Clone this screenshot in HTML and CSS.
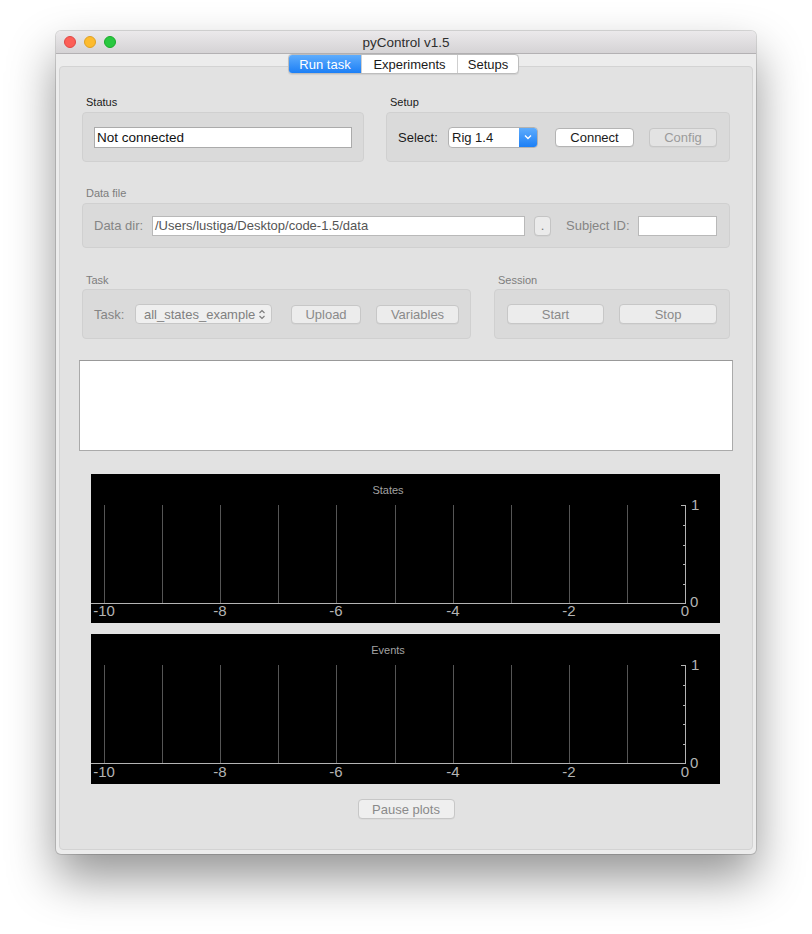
FILE: index.html
```html
<!DOCTYPE html>
<html>
<head>
<meta charset="utf-8">
<title>pyControl v1.5</title>
<link rel="stylesheet" href="styles.css">
</head>
<body>
<div class="window">
  <div class="titlebar">
    <div class="lights">
      <span class="light red"></span>
      <span class="light yellow"></span>
      <span class="light green"></span>
    </div>
    <div class="title">pyControl v1.5</div>
    <div class="spacer"></div>
  </div>
  <div class="wbody">
    <div class="tabs">
      <span class="tab tab-run active">Run task</span>
      <span class="tab tab-exp">Experiments</span>
      <span class="tab tab-set">Setups</span>
    </div>
    <div class="pane">
      <div class="row row-top">
        <section class="group">
          <div class="glabel">Status</div>
          <div class="gbox box-50">
            <div class="field status-field">Not connected</div>
          </div>
        </section>
        <section class="group">
          <div class="glabel">Setup</div>
          <div class="gbox box-50 setup-box">
            <span class="lbl lbl-select">Select:</span>
            <div class="combo combo-rig">
              <span class="combo-text">Rig 1.4</span>
              <span class="combo-arrow">
                <svg width="8" height="6" viewBox="0 0 8 6"><polyline points="1,1.5 4,4.5 7,1.5" fill="none" stroke="#fff" stroke-width="1.4"/></svg>
              </span>
            </div>
            <span class="btn btn-connect">Connect</span>
            <span class="btn btn-disabled btn-config">Config</span>
          </div>
        </section>
      </div>

      <section class="group group-data">
        <div class="glabel dim">Data file</div>
        <div class="gbox box-45 data-box">
          <span class="lbl dim lbl-datadir">Data dir:</span>
          <div class="field field-dir">/Users/lustiga/Desktop/code-1.5/data</div>
          <span class="btn btn-dots">.</span>
          <span class="lbl dim lbl-subject">Subject ID:</span>
          <div class="field field-subject"></div>
        </div>
      </section>

      <div class="row row-task">
        <section class="group">
          <div class="glabel dim">Task</div>
          <div class="gbox box-50 task-box">
            <span class="lbl dim lbl-task">Task:</span>
            <div class="combo-dis">
              <span>all_states_example</span>
              <svg width="8" height="11" viewBox="0 0 8 11"><polyline points="1.5,4 4,1.5 6.5,4" fill="none" stroke="#7a7a7a" stroke-width="1.1"/><polyline points="1.5,7 4,9.5 6.5,7" fill="none" stroke="#7a7a7a" stroke-width="1.1"/></svg>
            </div>
            <span class="btn btn-disabled btn-upload">Upload</span>
            <span class="btn btn-disabled btn-vars">Variables</span>
          </div>
        </section>
        <section class="group">
          <div class="glabel dim">Session</div>
          <div class="gbox box-50 session-box">
            <span class="btn btn-disabled btn-start">Start</span>
            <span class="btn btn-disabled btn-stop">Stop</span>
          </div>
        </section>
      </div>

      <div class="console"></div>

      <div class="plots">
        <svg class="plot" width="629" height="149" viewBox="0 0 629 149">
          <rect width="629" height="149" fill="#000"/>
          <text class="ptitle" x="297" y="20" text-anchor="middle">States</text>
          <g stroke="#555555" stroke-width="1">
            <line x1="13.5" y1="31" x2="13.5" y2="129"/>
            <line x1="71.5" y1="31" x2="71.5" y2="129"/>
            <line x1="129.5" y1="31" x2="129.5" y2="129"/>
            <line x1="187.5" y1="31" x2="187.5" y2="129"/>
            <line x1="245.5" y1="31" x2="245.5" y2="129"/>
            <line x1="304.5" y1="31" x2="304.5" y2="129"/>
            <line x1="362.5" y1="31" x2="362.5" y2="129"/>
            <line x1="420.5" y1="31" x2="420.5" y2="129"/>
            <line x1="478.5" y1="31" x2="478.5" y2="129"/>
            <line x1="536.5" y1="31" x2="536.5" y2="129"/>
          </g>
          <g stroke="#b4b4b4" stroke-width="1">
            <line x1="0" y1="129.5" x2="595" y2="129.5"/>
            <line x1="594.5" y1="31" x2="594.5" y2="130"/>
            <line x1="590" y1="31.5" x2="594" y2="31.5"/>
            <line x1="592" y1="51.5" x2="594" y2="51.5"/>
            <line x1="592" y1="71.5" x2="594" y2="71.5"/>
            <line x1="592" y1="90.5" x2="594" y2="90.5"/>
            <line x1="592" y1="110.5" x2="594" y2="110.5"/>
          </g>
          <g class="plabel">
            <text x="13" y="142" text-anchor="middle">-10</text>
            <text x="129" y="142" text-anchor="middle">-8</text>
            <text x="245" y="142" text-anchor="middle">-6</text>
            <text x="362" y="142" text-anchor="middle">-4</text>
            <text x="478" y="142" text-anchor="middle">-2</text>
            <text x="594" y="142" text-anchor="middle">0</text>
            <text x="600" y="36">1</text>
            <text x="599" y="133">0</text>
          </g>
        </svg>
        <svg class="plot" width="629" height="150" viewBox="0 0 629 150">
          <rect width="629" height="150" fill="#000"/>
          <text class="ptitle" x="297" y="20" text-anchor="middle">Events</text>
          <g stroke="#555555" stroke-width="1">
            <line x1="13.5" y1="31" x2="13.5" y2="129"/>
            <line x1="71.5" y1="31" x2="71.5" y2="129"/>
            <line x1="129.5" y1="31" x2="129.5" y2="129"/>
            <line x1="187.5" y1="31" x2="187.5" y2="129"/>
            <line x1="245.5" y1="31" x2="245.5" y2="129"/>
            <line x1="304.5" y1="31" x2="304.5" y2="129"/>
            <line x1="362.5" y1="31" x2="362.5" y2="129"/>
            <line x1="420.5" y1="31" x2="420.5" y2="129"/>
            <line x1="478.5" y1="31" x2="478.5" y2="129"/>
            <line x1="536.5" y1="31" x2="536.5" y2="129"/>
          </g>
          <g stroke="#b4b4b4" stroke-width="1">
            <line x1="0" y1="129.5" x2="595" y2="129.5"/>
            <line x1="594.5" y1="31" x2="594.5" y2="130"/>
            <line x1="590" y1="31.5" x2="594" y2="31.5"/>
            <line x1="592" y1="51.5" x2="594" y2="51.5"/>
            <line x1="592" y1="71.5" x2="594" y2="71.5"/>
            <line x1="592" y1="90.5" x2="594" y2="90.5"/>
            <line x1="592" y1="110.5" x2="594" y2="110.5"/>
          </g>
          <g class="plabel">
            <text x="13" y="143" text-anchor="middle">-10</text>
            <text x="129" y="143" text-anchor="middle">-8</text>
            <text x="245" y="143" text-anchor="middle">-6</text>
            <text x="362" y="143" text-anchor="middle">-4</text>
            <text x="478" y="143" text-anchor="middle">-2</text>
            <text x="594" y="143" text-anchor="middle">0</text>
            <text x="600" y="36">1</text>
            <text x="599" y="134">0</text>
          </g>
        </svg>
      </div>

      <div class="pause-row">
        <span class="btn btn-disabled btn-pause">Pause plots</span>
      </div>
    </div>
  </div>
</div>
</body>
</html>
```

FILE: styles.css
```css
* { box-sizing: border-box; }
html, body { margin: 0; padding: 0; background: #ffffff; }
body {
  font-family: "Liberation Sans", Arial, sans-serif;
  font-size: 13px;
  color: #1a1a1a;
  width: 812px;
  height: 934px;
  overflow: hidden;
}
.window {
  margin: 31px 0 0 56px;
  width: 700px;
  height: 823px;
  border-radius: 5px;
  background: #ececec;
  box-shadow: 0 24px 48px rgba(0,0,0,0.42), 0 0 0 1px rgba(0,0,0,0.14);
  display: flex;
  flex-direction: column;
  overflow: hidden;
}
.titlebar {
  height: 23px;
  flex: none;
  display: grid;
  grid-template-columns: 1fr auto 1fr;
  align-items: center;
  background: linear-gradient(#ebe9eb, #d5d3d5);
  border-bottom: 1px solid #b3b1b3;
}
.lights { display: flex; gap: 8px; padding-left: 8px; }
.light { width: 12px; height: 12px; border-radius: 50%; display: block; }
.red { background: #fc5f57; border: 0.5px solid #df4744; }
.yellow { background: #fdbb2e; border: 0.5px solid #dea123; }
.green { background: #29c840; border: 0.5px solid #1aab29; }
.title { font-size: 13.5px; color: #2e2e2e; }

.wbody { flex: 1; display: flex; flex-direction: column; }
.tabs {
  position: relative;
  z-index: 1;
  align-self: center;
  margin-right: 5px;
  display: flex;
  height: 20px;
  background: #fff;
  border: 1px solid #bdbdbd;
  border-radius: 4px;
  overflow: hidden;
  box-shadow: 0 0.5px 1px rgba(0,0,0,0.08);
}
.tab {
  display: flex;
  align-items: center;
  justify-content: center;
  font-size: 13px;
  color: #1a1a1a;
  border-left: 1px solid #cfcfcf;
}
.tab:first-child { border-left: none; }
.tab-run { width: 72px; }
.tab-exp { width: 96px; }
.tab-set { width: 61px; }
.tab.active {
  color: #fff;
  background: linear-gradient(#5eacfc, #1c7ff6);
}

.pane {
  flex: 1;
  margin: -8px 3px 4px;
  background: #e2e2e2;
  border: 1px solid #d3d3d3;
  border-radius: 4px;
  padding: 28px 22px 0;
  display: flex;
  flex-direction: column;
}
.row { display: grid; column-gap: 22px; }
.row-top { grid-template-columns: 282px 344px; }
.row-task { grid-template-columns: 389px 236px; column-gap: 23px; margin-top: 25px; }
.group-data { margin-top: 24px; }

.glabel {
  height: 14px;
  line-height: 14px;
  font-size: 11px;
  color: #1a1a1a;
  padding-left: 4px;
  margin-bottom: 3px;
}
.row-task .glabel { margin-bottom: 2px; }
.glabel.dim { color: #7d7d7d; }

.gbox {
  background: #dadada;
  border: 1px solid #d0d0d0;
  border-radius: 4px;
  display: flex;
  align-items: center;
  padding: 0 11px;
}
.box-50 { height: 50px; }
.box-45 { height: 45px; }

.lbl { font-size: 13px; white-space: nowrap; }
.dim { color: #858585; }

.field {
  height: 21px;
  background: #fff;
  border: 1px solid #ababab;
  display: flex;
  align-items: center;
  padding-left: 2px;
  white-space: nowrap;
}
.status-field { width: 258px; color: #111; font-size: 13.5px; }

.lbl-select { width: 40px; margin-right: 10px; }
.combo {
  width: 90px;
  height: 21px;
  background: #fff;
  border: 1px solid #b2b2b2;
  border-radius: 4px;
  display: flex;
  overflow: hidden;
}
.combo-text { flex: 1; display: flex; align-items: center; padding-left: 3px; }
.combo-arrow {
  width: 18px;
  display: flex;
  align-items: center;
  justify-content: center;
  background: linear-gradient(#5eacfc, #1c7ff6);
}
.btn {
  height: 20px;
  display: flex;
  align-items: center;
  justify-content: center;
  border-radius: 4px;
  background: #fff;
  border: 1px solid #b4b4b4;
  font-size: 13px;
  white-space: nowrap;
  box-shadow: 0 0.5px 0.5px rgba(0,0,0,0.06);
}
.btn-connect { width: 79px; height: 19px; margin-left: 17px; }
.btn-disabled {
  background: #ececec;
  border-color: #c7c7c7;
  color: #8a8a8a;
}
.btn-config { width: 68px; height: 19px; margin-left: 15px; background: #e3e3e3; color: #9b9b9b; }

.lbl-datadir { width: 49px; margin-right: 9px; }
.field-dir { width: 373px; height: 20px; border-color: #b9b9b9; color: #555; }
.btn-dots { width: 17px; margin-left: 9px; color: #777; background: #ebebeb; border-color: #c4c4c4; }
.lbl-subject { width: 64px; margin-left: 15px; margin-right: 8px; }
.field-subject { width: 79px; height: 20px; border-color: #b9b9b9; }

.lbl-task { width: 31px; margin-right: 10px; }
.combo-dis {
  width: 137px;
  height: 20px;
  border: 1px solid #c7c7c7;
  border-radius: 4px;
  background: #efefef;
  color: #808080;
  display: flex;
  align-items: center;
  justify-content: space-between;
  padding: 0 5px 0 8px;
  white-space: nowrap;
}
.btn-upload { width: 70px; margin-left: 19px; height: 19px; }
.btn-vars { width: 83px; margin-left: 15px; height: 19px; }

.session-box { padding-left: 12px; }
.btn-start { width: 97px; }
.btn-stop { width: 98px; margin-left: 15px; }

.console {
  margin: 21px -3px 0;
  height: 91px;
  background: #fff;
  border: 1px solid #aaaaaa;
  border-top-color: #999999;
}

.plots {
  margin: 23px 0 0 9px;
  width: 629px;
  display: flex;
  flex-direction: column;
  gap: 11px;
}
.plot { display: block; }
.ptitle { font-family: "Liberation Sans", Arial, sans-serif; font-size: 11px; fill: #a3a3a3; }
.plabel text { font-family: "Liberation Sans", Arial, sans-serif; font-size: 15px; fill: #b4b4b4; }

.pause-row { display: flex; justify-content: center; margin-top: 15px; }
.btn-pause { width: 97px; color: #8a8a8a; background: #efefef; }
```
